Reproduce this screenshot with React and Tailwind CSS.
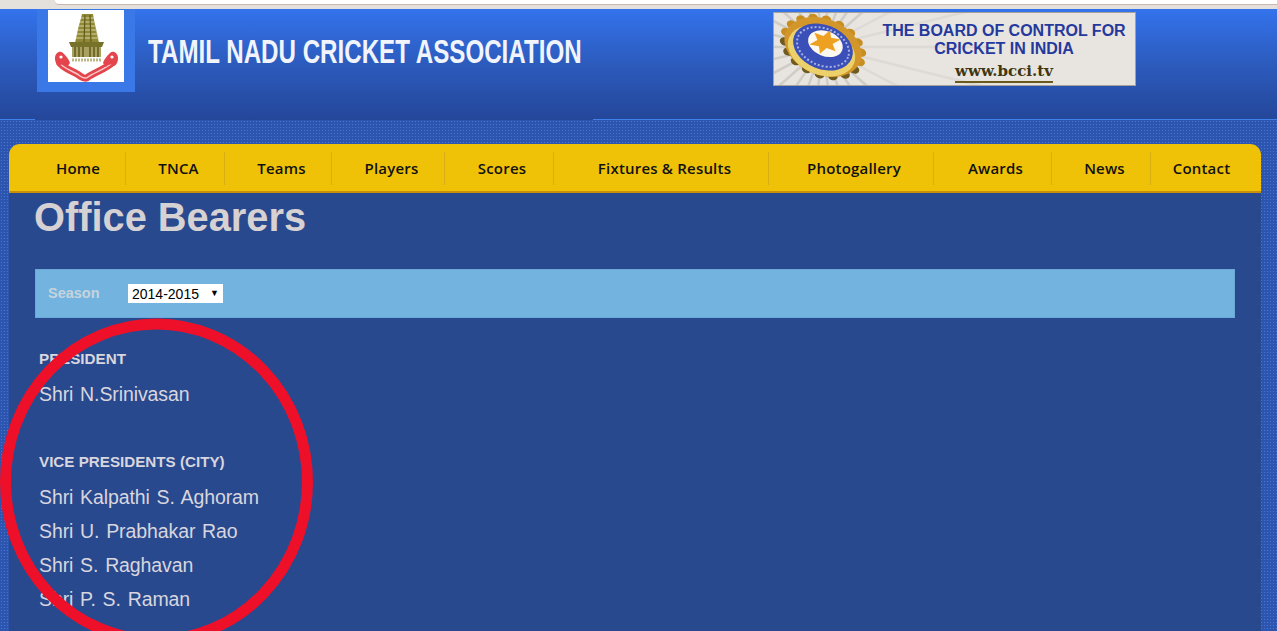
const navItems = [
    { label: 'Home', width: 'w-[97px] pl-[2px]' },
    { label: 'TNCA', width: 'w-[99px] pl-[7px]' },
    { label: 'Teams', width: 'w-[107px] pl-[7px]' },
    { label: 'Players', width: 'w-[113px] pl-[7px]' },
    { label: 'Scores', width: 'w-[109px] pl-[6px]' },
    { label: 'Fixtures & Results', width: 'w-[215px] pl-[7px]' },
    { label: 'Photogallery', width: 'w-[165px] pl-[6px]' },
    { label: 'Awards', width: 'w-[118px] pl-[6px]' },
    { label: 'News', width: 'w-[99px] pl-[7px]' },
    { label: 'Contact', width: 'w-[101px]' },
];

const cityVps = ['Shri Kalpathi S. Aghoram', 'Shri U. Prabhakar Rao', 'Shri S. Raghavan', 'Shri P. S. Raman'];

const dotted = 'bg-[#2c55b0] bg-[radial-gradient(#4a76d2_1px,transparent_1px)] bg-[length:3px_3px]';

const TempleLogo = () => (
    <svg viewBox="0 0 76 72" className="w-[76px] h-[72px]">
        <path d="M34 4h11l1 6 1.500 7 3.500 16H27l3.500-16 2-7z" fill="#8f8836" />
        <path d="M33 8h13M32 12h15M31 16h17M30 20h19M29 24h21M28 28h23" stroke="#d6d29c" strokeWidth="1.100" />
        <path d="M37 5l-1 28M42 5l1 28" stroke="#5f5a1c" strokeWidth="1.200" />
        <path d="M21 32h35l-2 5H23z" fill="#77722a" />
        <rect x="24" y="37" width="29" height="10" fill="#a8a160" />
        <path d="M27 37v10M31 37v10M35 37v10M42 37v10M46 37v10M50 37v10" stroke="#5f5a1c" strokeWidth="1.500" />
        <path d="M24 50h29" stroke="#bdb88a" strokeWidth="3" strokeDasharray="2 1" />
        <path d="M11 52c4 7 15 9 21 14 3 2 6 3 8 1 7-5 18-8 25-15" fill="none" stroke="#e4454d" strokeWidth="7" />
        <path d="M11 52c4 7 15 9 21 14 3 2 6 3 8 1 7-5 18-8 25-15" fill="none" stroke="#f8c9c9" strokeWidth="1.500" />
        <path d="M7 48c0-5 5-8 8-5s6 6 7 10l-3 4c-3-3-5-3-8-1-3-1-4-5-4-8z" fill="#e4454d" />
        <path d="M70 48c0-5-5-8-8-5s-6 6-7 10l3 4c3-3 5-3 8-1 3-1 4-5 4-8z" fill="#e4454d" />
        <circle cx="13" cy="47" r="1.600" fill="#fff" />
        <circle cx="64" cy="47" r="1.600" fill="#fff" />
    </svg>
);

const BannerArt = () => {
    const cx = 49;
    const cy = 34;
    const rays = Array.from({ length: 26 }, (_, i) => (i * Math.PI * 2) / 26);
    const teeth = Array.from({ length: 18 }, (_, i) => (i * Math.PI * 2) / 18);
    const star = Array.from({ length: 12 }, (_, i) => {
        const a = (i * Math.PI) / 6 - 0.2;
        const r = i % 2 ? 8 : 16;
        return `${51 + Math.cos(a) * r},${29 + Math.sin(a) * r * 0.78}`;
    }).join(' ');

    return (
        <svg viewBox="0 0 361 72" className="absolute inset-0 w-[361px] h-[72px]">
            {rays.map((a) => (
                <line
                    key={a}
                    x1={cx}
                    y1={cy}
                    x2={cx + Math.cos(a) * 170}
                    y2={cy + Math.sin(a) * 170}
                    stroke="#cbc8c1"
                    strokeWidth="2.500"
                    opacity={Math.cos(a) > 0.8 ? 0.35 : 0.8}
                />
            ))}
            <g transform={`rotate(22 ${cx} ${cy})`}>
                {teeth.map((a) => (
                    <ellipse
                        key={a}
                        cx={cx + Math.cos(a) * 40}
                        cy={cy + Math.sin(a) * 27}
                        rx="5"
                        ry="4"
                        fill={Math.sin(a) > 0.3 ? '#6f5a20' : '#c98e22'}
                    />
                ))}
                <ellipse cx={cx} cy={cy} rx="40" ry="28" fill="#d2962a" />
                <ellipse cx={cx} cy={cy + 4} rx="35" ry="24" fill="#ecd06a" />
                <ellipse cx={cx} cy={cy} rx="31" ry="22" fill="#3a4fb8" />
                <ellipse cx={cx} cy={cy} rx="27" ry="18.500" fill="none" stroke="#a6b2e6" strokeWidth="2" strokeDasharray="2 2" />
                <ellipse cx={cx + 1} cy={cy - 4} rx="18" ry="12.500" fill="#fdf8ee" />
            </g>
            <polygon points={star} fill="#eea020" />
        </svg>
    );
};

export default function App() {
    return (
        <div className="relative h-[631px] overflow-hidden font-['Liberation_Sans',Arial,sans-serif]">
            {/* browser chrome left in the capture */}
            <div className="h-[9px] bg-[#e4e1dc] pl-[55px]">
                <div className="h-[5px] bg-white border-b border-[#c9b9b0] rounded-bl-sm" />
            </div>

            <div className={`${dotted} h-[622px] flex flex-col`}>
                <header className="h-[110px] shrink-0 bg-gradient-to-b from-[#3373ec] via-[#2c5bbd] to-[#24479a] flex items-start pl-[37px]">
                    <div className="w-[98px] h-[83px] bg-[#3a78e8] pl-[11px] pt-[1px]">
                        <div className="bg-white w-[76px] h-[72px]">
                            <TempleLogo />
                        </div>
                    </div>
                    <h1 className="ml-[13px] mt-[25px] text-[34px] leading-[34px] font-bold text-[#f1f4fb] whitespace-nowrap origin-left scale-x-[0.71]">
                        TAMIL NADU CRICKET ASSOCIATION
                    </h1>
                    <div className="relative ml-auto mr-[141px] mt-[3px] w-[363px] h-[74px] border border-[#a5a29c] bg-[#e8e5e1] overflow-hidden text-center">
                        <BannerArt />
                        <div className="relative pl-[108px] pr-[9px] pt-[9px] text-[16px] leading-[18px] font-bold text-[#25399d]">
                            <p>THE BOARD OF CONTROL FOR</p>
                            <p>CRICKET IN INDIA</p>
                            <p className="mt-[5px] text-[15px] leading-[16px] text-[#40360f] font-['DejaVu_Serif',serif]">
                                <span className="border-b-2 border-[#6b5a1c] pb-[1px]">www.bcci.tv</span>
                            </p>
                        </div>
                    </div>
                </header>
                <div className="h-[1px] shrink-0 flex">
                    <div className="w-[35px] bg-[#3f82ee]" />
                    <div className="w-[558px] bg-[#24479a]" />
                    <div className="flex-1 bg-[#3f82ee]" />
                </div>

                <div className="ml-[9px] mr-[16px] mt-[24px] flex-1 flex flex-col min-h-0">
                    <nav className="h-[49px] shrink-0 rounded-t-[11px] bg-[#f0c207] border-b-2 border-[#c98f0a] flex items-center pl-[20px] font-['Open_Sans',sans-serif]">
                        {navItems.map((item, i) => (
                            <a
                                key={item.label}
                                className={`${item.width} h-[33px] mt-[2px] flex items-center justify-center text-[15px] font-semibold tracking-[0.2px] text-[#111] ${i < navItems.length - 1 ? 'border-r border-[#d9ae12]' : ''}`}
                            >
                                {item.label}
                            </a>
                        ))}
                    </nav>

                    <main className="flex-1 bg-[#29498e] px-[26px]">
                        <h2 className="text-[39.800px] leading-[44px] mt-[2px] -ml-[1px] font-bold text-[#d6d1d3]">Office Bearers</h2>

                        <div className="mt-[30px] h-[49px] bg-[#73b3e0] border border-[#6aa8d6] flex items-center pl-[12px]">
                            <label className="w-[80px] text-[14.500px] font-bold text-[#c6d3dd]">Season</label>
                            <div className="relative w-[95px] h-[19px] -mt-[1px]">
                                <select className="block w-full h-full appearance-none bg-white text-black text-[14px] pl-[4px]">
                                    <option>2014-2015</option>
                                </select>
                                <span className="absolute right-[4px] top-[4px] text-[9px] leading-[10px] text-black pointer-events-none">▼</span>
                            </div>
                        </div>

                        <section className="pl-[4px] text-[#d8d6de]">
                            <h3 className="mt-[32px] text-[15.200px] leading-[18px] font-bold">PRESIDENT</h3>
                            <p className="mt-[9px] text-[19.500px] leading-[34px] tracking-[-0.1px] [word-spacing:1.500px]">Shri N.Srinivasan</p>
                            <h3 className="mt-[42px] text-[15.200px] leading-[18px] font-bold">VICE PRESIDENTS (CITY)</h3>
                            <ul className="mt-[9px] text-[19.500px] leading-[34px] tracking-[-0.1px] [word-spacing:1.500px]">
                                {cityVps.map((name) => (
                                    <li key={name}>{name}</li>
                                ))}
                            </ul>
                        </section>
                    </main>
                </div>
            </div>

            {/* red marker circle drawn over the screenshot */}
            <svg viewBox="0 0 1277 631" className="absolute inset-0 w-[1277px] h-[631px] pointer-events-none">
                <ellipse cx="156.500" cy="482" rx="151" ry="158" fill="none" stroke="#ee1028" strokeWidth="11" />
            </svg>
        </div>
    );
}
